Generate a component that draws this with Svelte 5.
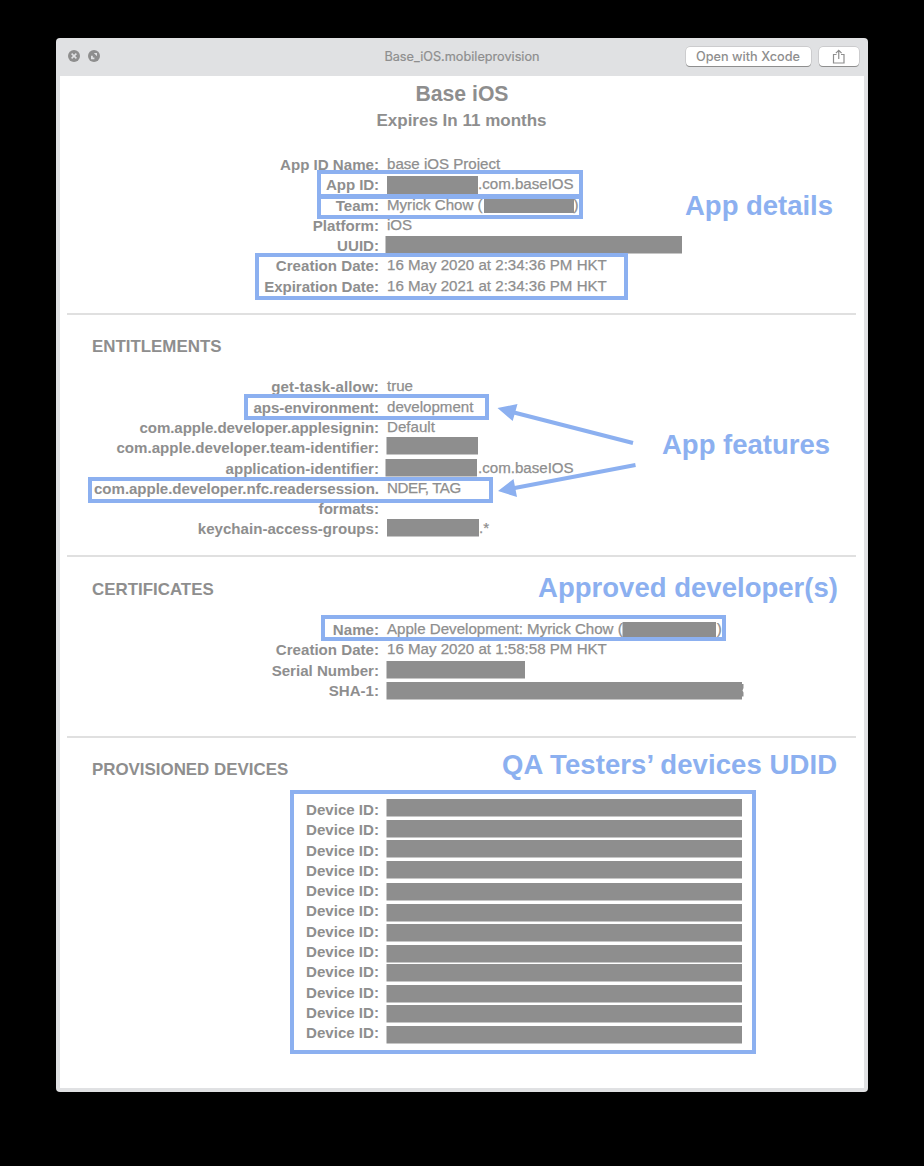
<script>
  const appRows = [
    { label: 'App ID Name:', value: 'base iOS Project' },
    { label: 'App ID:', value: '.com.baseIOS', indent: 91, tracking: -0.1 },
    { label: 'Team:', value: 'Myrick Chow (', tail: ')', gap: 91 },
    { label: 'Platform:', value: 'iOS' },
    { label: 'UUID:' },
    { label: 'Creation Date:', value: '16 May 2020 at 2:34:36 PM HKT' },
    { label: 'Expiration Date:', value: '16 May 2021 at 2:34:36 PM HKT', tracking: -0.06 }
  ];
  const entitlementRows = [
    { label: 'get-task-allow:', value: 'true', tracking: 0.14 },
    { label: 'aps-environment:', value: 'development', tracking: -0.07 },
    { label: 'com.apple.developer.applesignin:', value: 'Default', tracking: -0.09 },
    { label: 'com.apple.developer.team-identifier:' },
    { label: 'application-identifier:', value: '.com.baseIOS', indent: 91 },
    { label: 'com.apple.developer.nfc.readersession.', value: 'NDEF, TAG', tracking: -0.05, valueTracking: -0.4 },
    { label: 'formats:' },
    { label: 'keychain-access-groups:', value: '.*', indent: 92 }
  ];
  const certificateRows = [
    { label: 'Name:', value: 'Apple Development: Myrick Chow (', tail: ')', gap: 94 },
    { label: 'Creation Date:', value: '16 May 2020 at 1:58:58 PM HKT' },
    { label: 'Serial Number:' },
    { label: 'SHA-1:' }
  ];
  const deviceRows = Array.from({ length: 12 }, () => ({ label: 'Device ID:' }));

  // x, y, width, height
  const redactions = [
    [387, 176, 91, 18], [484, 198, 90, 15], [385.5, 236, 296.5, 17.5],
    [386.5, 437, 91.5, 17.5], [385.5, 459, 91.5, 17.5], [387, 519, 92, 17.5],
    [622.5, 622, 93.5, 15], [386.5, 661, 138.5, 17.5], [386.5, 682, 355.5, 17.5],
    ...[799, 820, 840, 861, 883, 904, 924, 945, 964, 985, 1005, 1026].map((y) => [386.5, y, 355.5, 17.5])
  ];
  const outlines = [
    [317, 170, 266, 28], [317, 195, 266, 24], [255, 253, 373, 47],
    [244, 394, 245, 26], [88, 477, 405, 26], [321, 615, 405, 26], [290, 790, 466, 264]
  ];
</script>

{#snippet table(rows)}
  <dl class="table">
    {#each rows as row}
      <div class="row">
        <dt style:letter-spacing="{row.tracking ?? 0}px">{row.label}</dt>
        <dd style:letter-spacing="{row.valueTracking ?? 0}px">
          {#if row.value}
            <span style:margin-left="{row.indent ?? 0}px">{row.value}</span>{#if row.tail}<span style:margin-left="{row.gap}px">{row.tail}</span>{/if}
          {/if}
        </dd>
      </div>
    {/each}
  </dl>
{/snippet}

<main class="desktop">
  <div class="window">
    <header class="titlebar">
      <div class="controls">
        <svg width="12" height="12" viewBox="0 0 12 12"><circle cx="6" cy="6" r="6" /><path d="M3.6 3.6l4.8 4.8M8.4 3.6L3.6 8.4" /></svg>
        <svg width="12" height="12" viewBox="0 0 12 12"><circle cx="6" cy="6" r="6" /><path class="fill" d="M5.8 3h3.2v3.2zM3 5.8v3.400h3.400v-1.800h-1.600v-1.600z" /></svg>
      </div>
      <span class="filename">Base_iOS.mobileprovision</span>
      <div class="actions">
        <button class="open">Open with Xcode</button>
        <button class="share" aria-label="Share">
          <svg width="14" height="16" viewBox="0 0 14 16"><path d="M4.500 5.500H1.500v8.500h10.500V5.500h-3M6.750 10V1.500M3.900 4.200L6.750 1.300l2.850 2.900" /></svg>
        </button>
      </div>
    </header>

    <div class="content">
      <section class="summary">
        <h1>Base iOS</h1>
        <p class="expires">Expires In 11 months</p>
        {@render table(appRows)}
      </section>
      <section class="entitlements">
        <h2>ENTITLEMENTS</h2>
        {@render table(entitlementRows)}
      </section>
      <section class="certificates">
        <h2>CERTIFICATES</h2>
        {@render table(certificateRows)}
      </section>
      <section class="devices">
        <h2>PROVISIONED DEVICES</h2>
        {@render table(deviceRows)}
      </section>
    </div>
  </div>

  <svg class="annotations" width="924" height="1166" viewBox="0 0 924 1166">
    <g class="redactions">
      {#each redactions as [x, y, width, height]}
        <rect {x} {y} {width} {height} />
      {/each}
      <path d="M742 684h1.500v4l-1 2.500 1 2v4h-1.500z" />
    </g>
    <g class="outlines">
      {#each outlines as [x, y, w, h]}
        <rect x={x + 2} y={y + 2} width={w - 4} height={h - 4} />
      {/each}
    </g>
    <g class="arrows">
      <path d="M633 443L512 412M635.500 465L512 488.500" />
      <path class="head" d="M497.500 408L517.500 404L512.700 421zM498 491L513.500 479L517 497z" />
    </g>
    <g class="notes">
      <text x="685" y="215" textLength="148">App details</text>
      <text x="662" y="454" textLength="168">App features</text>
      <text x="538" y="597" textLength="300">Approved developer(s)</text>
      <text x="502" y="774" textLength="335">QA Testers’ devices UDID</text>
    </g>
  </svg>
</main>

<style>
  :global(body) {
    background: #000;
  }
  .desktop {
    position: relative;
    box-sizing: border-box;
    width: 924px;
    height: 1166px;
    padding: 38px 56px 74px;
    background: #000;
    color: #8e8e8e;
    font-family: "Liberation Sans", Arial, sans-serif;
  }
  .window {
    box-sizing: border-box;
    height: 1054px;
    padding: 0 4px 4px;
    border-radius: 4px;
    background: #e0e1e3;
    overflow: hidden;
  }
  .titlebar {
    display: grid;
    grid-template-columns: 1fr auto 1fr;
    align-items: center;
    box-sizing: border-box;
    height: 38px;
    padding: 0 5px 0 8px;
    font-family: Inter, sans-serif;
  }
  .controls,
  .actions {
    display: flex;
    gap: 8px;
    align-items: center;
  }
  .controls {
    padding-bottom: 2px;
  }
  .controls circle {
    fill: #8e8e8e;
  }
  .controls path {
    fill: none;
    stroke: #e0e1e3;
    stroke-width: 1.5;
  }
  .controls .fill {
    fill: #e0e1e3;
    stroke: none;
  }
  .filename {
    padding: 0 3px 1px 0;
    font-size: 12.7px;
    -webkit-text-stroke: 0.2px;
  }
  .actions {
    justify-content: flex-end;
    padding-bottom: 1px;
  }
  button {
    display: flex;
    justify-content: center;
    align-items: center;
    box-sizing: border-box;
    height: 19px;
    padding: 0;
    border: 0;
    border-radius: 4px;
    background: #fff;
    box-shadow: 0 1px 0 #8e8e8e, 0 0 0 0.5px #b8b8ba;
    color: #8e8e8e;
    font: 500 12.7px Inter, sans-serif;
  }
  .open {
    width: 125px;
    padding-right: 1px;
  }
  .share {
    width: 40px;
  }
  .share path {
    fill: none;
    stroke: #8e8e8e;
    stroke-width: 1.2;
  }
  .content {
    height: 1012px;
    padding: 0 8px 0 7px;
    background: #fff;
  }
  section {
    display: flex;
    flex-direction: column;
    box-sizing: border-box;
  }
  section + section {
    border-top: 2px solid #e0e0e0;
  }
  .summary {
    height: 237px;
  }
  .entitlements {
    height: 242px;
    padding-top: 22px;
  }
  .certificates {
    height: 181px;
    padding-top: 23px;
  }
  .devices {
    padding-top: 22px;
  }
  h1,
  h2,
  p,
  dl,
  dd {
    margin: 0;
  }
  h1 {
    padding: 6px 0 0 1px;
    font-size: 21.2px;
    line-height: 24px;
    text-align: center;
  }
  .expires {
    padding-top: 5px;
    font-size: 17px;
    font-weight: bold;
    line-height: 20px;
    text-align: center;
  }
  h2 {
    padding-left: 25px;
    font-size: 16.9px;
    line-height: 20px;
  }
  .table {
    padding-top: 20px;
  }
  .summary .table {
    padding-top: 24px;
  }
  .entitlements .table {
    padding-top: 20.4px;
  }
  .row {
    display: grid;
    grid-template-columns: 312px 1fr;
    column-gap: 8px;
    height: 20.29px;
    font-size: 15.1px;
    line-height: 20px;
    white-space: nowrap;
  }
  dt {
    font-weight: bold;
    text-align: right;
  }
  dd {
    margin-top: -1px;
    -webkit-text-stroke: 0.25px;
  }
  .annotations {
    position: absolute;
    inset: 0;
  }
  .redactions {
    fill: #8e8e8e;
  }
  .outlines rect {
    fill: none;
    stroke: #8cb0f0;
    stroke-width: 4;
  }
  .arrows path {
    stroke: #8cb0f0;
    stroke-width: 4;
  }
  .arrows .head {
    fill: #8cb0f0;
    stroke: none;
  }
  .notes {
    fill: #8cb0f0;
    font-size: 27.5px;
    font-weight: bold;
  }
</style>
